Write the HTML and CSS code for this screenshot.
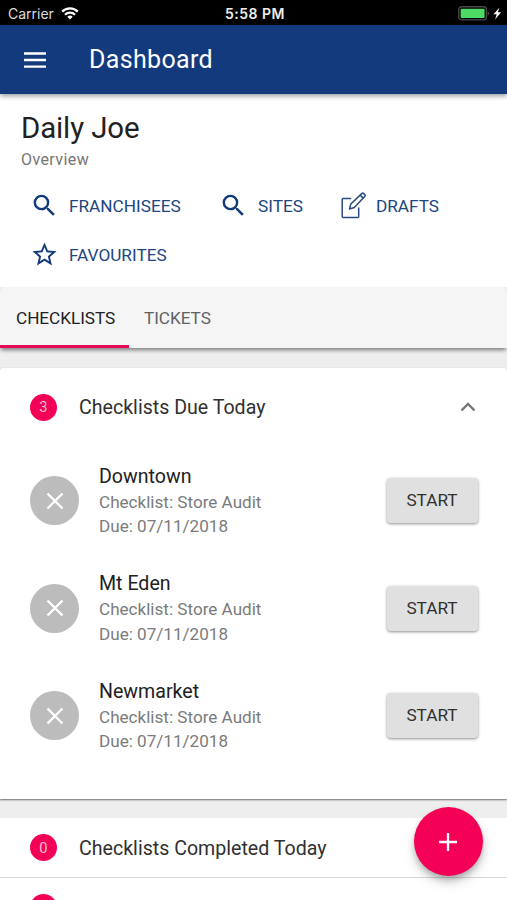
FILE: index.html
```html
<!DOCTYPE html>
<html lang="en">
<head>
<meta charset="utf-8">
<title>Dashboard</title>
<link rel="stylesheet" href="styles.css">
</head>
<body>
<svg class="defs" width="0" height="0">
  <symbol id="search" viewBox="0 0 24 24"><path d="M15.5 14h-.79l-.28-.27A6.47 6.47 0 0 0 16 9.5 6.5 6.5 0 1 0 9.500 16c1.610 0 3.090-.59 4.230-1.570l.27.28v.79l5 4.990L20.490 19l-4.990-5zm-6 0a4.500 4.500 0 1 1 0-9 4.500 4.500 0 0 1 0 9z"/></symbol>
  <symbol id="cross" viewBox="0 0 20 20"><path d="M2.500 2.500l15 15M17.500 2.500l-15 15" fill="none" stroke="#fff" stroke-width="2.400"/></symbol>
</svg>
<div class="status">
  <div class="carrier"><span>Carrier</span>
    <svg class="wifi" viewBox="0 0 18 13"><g fill="none" stroke="#fff" stroke-width="2.200"><path d="M1.200 4.600a11 11 0 0 1 15.600 0"/><path d="M4 7.700a7 7 0 0 1 10 0"/></g><path d="M9 12.500L6.300 9.800a3.900 3.900 0 0 1 5.400 0z" fill="#fff"/></svg>
  </div>
  <span class="time">5:58 PM</span>
  <svg class="battery" viewBox="0 0 44 15"><rect x=".7" y=".7" width="27.800" height="13.200" rx="3" fill="none" stroke="#454748" stroke-width="1.400"/><rect x="2.600" y="2.700" width="24" height="9.200" rx="1" fill="#4cd964"/><path d="M29.800 5.200q2 2.100 0 4.200z" fill="#666"/><path d="M41.500 1.500L35.500 8.200h3.200l-1.600 5.300 6-7.200h-3.300z" fill="#fff"/></svg>
</div>
<header class="appbar">
  <svg class="menu" viewBox="0 0 24 18"><path d="M1 2.500h22M1 9h22M1 15.600h22" stroke="#fff" stroke-width="2.400"/></svg>
  <h1>Dashboard</h1>
</header>
<section class="overview">
  <h2>Daily Joe</h2>
  <p class="sub">Overview</p>
  <nav class="links">
    <a class="franchisees"><svg><use href="#search"/></svg><span>FRANCHISEES</span></a>
    <a class="sites"><svg><use href="#search"/></svg><span>SITES</span></a>
    <a class="drafts"><svg viewBox="0 0 29 29"><g fill="none" stroke="#294b80" stroke-width="1.500" stroke-linejoin="round" stroke-linecap="round"><path d="M11.500 7.500H4.200q-1 0-1 1v17q0 1 1 1h14.500q1 0 1-1V17"/><path d="M10.500 18l1.300-5L22.700 2.600q1-1 2 0l1 1q1 1 0 2L15.300 16.500zM21.200 4.100l3 3"/></g></svg><span>DRAFTS</span></a>
    <a class="favourites"><svg viewBox="0 0 24 24"><path d="M22 9.240l-7.190-.62L12 2 9.190 8.630 2 9.240l5.460 4.730L5.820 21 12 17.270 18.180 21l-1.630-7.030L22 9.240zM12 15.400l-3.760 2.270 1-4.280-3.320-2.880 4.380-.38L12 6.100l1.710 4.040 4.380.38-3.320 2.880 1 4.280L12 15.400z"/></svg><span>FAVOURITES</span></a>
  </nav>
</section>
<div class="tabs"><div class="tab active">CHECKLISTS</div><div class="tab">TICKETS</div></div>
<section class="panel">
  <div class="panel-head"><span class="badge">3</span><h3>Checklists Due Today</h3>
    <svg class="chevron" viewBox="0 0 16 10"><path d="M1.500 8.500L8 2l6.500 6.500" fill="none" stroke="#757575" stroke-width="2.300"/></svg></div>
  <div class="item"><span class="avatar"><svg><use href="#cross"/></svg></span><div class="info"><h4>Downtown</h4><p>Checklist: Store Audit</p><p>Due: 07/11/2018</p></div><button>START</button></div>
  <div class="item"><span class="avatar"><svg><use href="#cross"/></svg></span><div class="info"><h4>Mt Eden</h4><p>Checklist: Store Audit</p><p>Due: 07/11/2018</p></div><button>START</button></div>
  <div class="item"><span class="avatar"><svg><use href="#cross"/></svg></span><div class="info"><h4>Newmarket</h4><p>Checklist: Store Audit</p><p>Due: 07/11/2018</p></div><button>START</button></div>
</section>
<section class="collapsed">
  <div class="row"><span class="badge">0</span><h3>Checklists Completed Today</h3></div>
  <div class="row next"><span class="badge"></span></div>
</section>
<div class="fab"><svg viewBox="0 0 18 18"><path d="M9 0v18M0 9h18" stroke="#fff" stroke-width="2.300"/></svg></div>
</body>
</html>
```
FILE: styles.css
```css
* { box-sizing: border-box; margin: 0; padding: 0; }
html { height: 900px; overflow: hidden; }
body { height: 900px; overflow: hidden; display: flex; flex-direction: column; background: #eee; font-family: Roboto, sans-serif; color: #212121; }
body > * { flex-shrink: 0; }
h1, h2, h3, h4 { font-weight: 400; white-space: nowrap; }
svg { display: block; flex-shrink: 0; }
.defs { position: absolute; }

.status { height: 25px; background: #000; color: #fff; display: grid; grid-template-columns: 1fr auto 1fr; align-items: center; padding: 2px 5px 0 8px; font-family: Inter, sans-serif; font-size: 14px; }
.carrier { display: flex; align-items: center; gap: 7px; color: #ddd; }
.wifi { width: 18px; height: 13px; }
.time { font-weight: 600; letter-spacing: .5px; font-size: 14px; color: #eee; }
.battery { width: 44px; height: 15px; justify-self: end; }

.appbar { height: 69px; background: #133a7c; color: #fff; display: flex; align-items: center; padding-left: 23px; box-shadow: 0 2px 5px rgba(0,0,0,.4); z-index: 2; }
.menu { width: 24px; height: 18px; margin-right: 42px; }
h1 { font-size: 25px; letter-spacing: .35px; }

.overview { height: 193px; background: #fff; padding: 16px 20px 0 21px; }
h2 { font-size: 29.4px; line-height: 36px; letter-spacing: -.1px; }
.sub { font-size: 16px; line-height: 20px; margin-top: 4px; color: #757575; letter-spacing: .4px; }
.links { display: grid; grid-template-columns: 189px 120px auto; grid-auto-rows: 49px; align-items: center; padding: 11px 0 0 9px; color: #204580; fill: #133a7c; font-size: 17.2px; }
.links a { display: flex; align-items: center; gap: 10px; }
.links svg { width: 29px; height: 29px; }
.drafts svg { margin-right: -2px; }

.tabs { height: 61px; background: #f5f5f5; display: flex; box-shadow: 0 3px 4px -1px rgba(0,0,0,.5); border-radius: 5px 5px 0 0; font-size: 17.2px; color: #616161; z-index: 1; }
.tab { line-height: 63px; width: 129px; padding-left: 15px; letter-spacing: -.05px; }
.tab.active { color: #212121; border-bottom: 3px solid #e60b58; padding-left: 16px; }

.panel { height: 431px; margin-top: 20px; background: #fff; border-radius: 3px 3px 0 0; box-shadow: 0 1px 2px rgba(0,0,0,.55); }
.panel-head { height: 78px; margin-bottom: 1px; display: flex; align-items: center; padding: 0 31px 0 30px; }
.badge { width: 27px; height: 27px; border-radius: 50%; background: #f50057; color: #fbc0d4; font-size: 14.7px; display: flex; align-items: center; justify-content: center; margin-right: 22px; }
h3 { font-size: 19.6px; color: #303030; }
.chevron { width: 16px; height: 10px; margin-left: auto; }
.item { height: 107.5px; display: flex; align-items: center; padding: 0 29px 0 30px; }
.avatar { width: 49px; height: 49px; border-radius: 50%; background: #bcbcbc; display: flex; align-items: center; justify-content: center; margin-right: 20px; }
.avatar svg { width: 20px; height: 20px; }
.info { flex: 1; font-size: 17.1px; color: #7b7b7b; }
h4 { font-size: 19.6px; line-height: 27px; color: #212121; }
.info p { line-height: 24.5px; }
button { width: 91px; height: 45px; padding: 0 1px 1px 0; border: 0; border-radius: 4px; background: #e0e0e0; color: #303030; font: 17.2px Roboto, sans-serif; box-shadow: 0 1px 3px rgba(0,0,0,.45); }

.collapsed { margin-top: 19px; height: 82px; background: #fff; overflow: hidden; }
.row { height: 60px; display: flex; align-items: center; padding-left: 30px; border-bottom: 1px solid #d8d8d8; }
.row h3 { padding-top: 1px; }
.next { align-items: flex-start; padding-top: 16px; border: 0; }
.fab { position: absolute; left: 414px; top: 807px; width: 69px; height: 69px; padding-right: 1px; border-radius: 50%; background: #f50057; display: flex; align-items: center; justify-content: center; box-shadow: 0 4px 6px -1px rgba(0,0,0,.25), 0 7px 12px rgba(0,0,0,.15); z-index: 3; }
.fab svg { width: 18px; height: 18px; }
```
